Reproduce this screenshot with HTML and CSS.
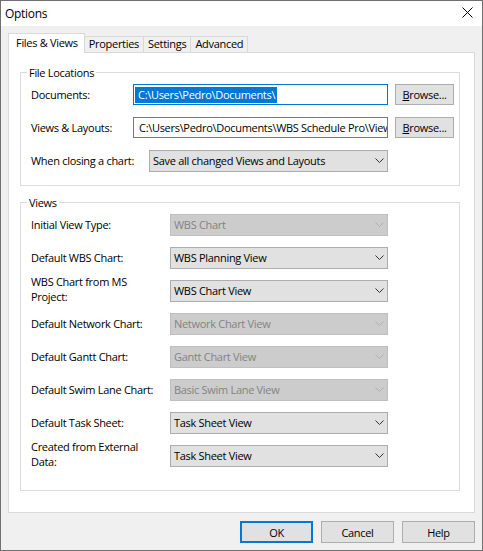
FILE: index.html
```html
<!DOCTYPE html>
<html lang="en">
<head>
    <meta charset="UTF-8">
    <title>Options</title>
    <link rel="stylesheet" href="styles.css">
</head>
<body>
    <div class="window">
        <!-- Title bar -->
        <div class="titlebar">
            <span class="title">Options</span>
            <svg class="close" width="11" height="11" viewBox="0 0 11 11">
                <path d="M0.5 0.5 L10.5 10.5 M10.5 0.5 L0.5 10.5" stroke="#000" stroke-width="1" fill="none"/>
            </svg>
        </div>

        <div class="body">
            <!-- Tabs -->
            <div class="tabs">
                <div class="tab active">Files &amp; Views</div>
                <div class="tab">Properties</div>
                <div class="tab">Settings</div>
                <div class="tab">Advanced</div>
            </div>

            <div class="panel">
                <!-- File Locations -->
                <div class="group files">
                    <span class="legend">File Locations</span>
                    <div class="row">
                        <span class="lbl">Documents:</span>
                        <div class="field focus"><span class="sel">C:\Users\Pedro\Documents\</span></div>
                        <div class="btn browse"><u>B</u>rowse...</div>
                    </div>
                    <div class="row">
                        <span class="lbl">Views &amp; Layouts:</span>
                        <div class="field"><span class="txt">C:\Users\Pedro\Documents\WBS Schedule Pro\View</span></div>
                        <div class="btn browse"><u>B</u>rowse...</div>
                    </div>
                    <div class="row">
                        <span class="lbl wide">When closing a chart:</span>
                        <div class="combo long"><span>Save all changed Views and Layouts</span><svg width="9" height="5" viewBox="0 0 9 5"><path d="M0.5 0.5 L4.5 4.5 L8.5 0.5" fill="none" stroke="currentColor"/></svg></div>
                    </div>
                </div>

                <!-- Views -->
                <div class="group views">
                    <span class="legend">Views</span>
                    <div class="row">
                        <span class="lbl vw">Initial View Type:</span>
                        <div class="combo off"><span>WBS Chart</span><svg width="9" height="5" viewBox="0 0 9 5"><path d="M0.5 0.5 L4.5 4.5 L8.5 0.5" fill="none" stroke="currentColor"/></svg></div>
                    </div>
                    <div class="row">
                        <span class="lbl vw">Default WBS Chart:</span>
                        <div class="combo"><span>WBS Planning View</span><svg width="9" height="5" viewBox="0 0 9 5"><path d="M0.5 0.5 L4.5 4.5 L8.5 0.5" fill="none" stroke="currentColor"/></svg></div>
                    </div>
                    <div class="row">
                        <span class="lbl vw two">WBS Chart from MS<br>Project:</span>
                        <div class="combo"><span>WBS Chart View</span><svg width="9" height="5" viewBox="0 0 9 5"><path d="M0.5 0.5 L4.5 4.5 L8.5 0.5" fill="none" stroke="currentColor"/></svg></div>
                    </div>
                    <div class="row">
                        <span class="lbl vw">Default Network Chart:</span>
                        <div class="combo off"><span>Network Chart View</span><svg width="9" height="5" viewBox="0 0 9 5"><path d="M0.5 0.5 L4.5 4.5 L8.5 0.5" fill="none" stroke="currentColor"/></svg></div>
                    </div>
                    <div class="row">
                        <span class="lbl vw">Default Gantt Chart:</span>
                        <div class="combo off"><span>Gantt Chart View</span><svg width="9" height="5" viewBox="0 0 9 5"><path d="M0.5 0.5 L4.5 4.5 L8.5 0.5" fill="none" stroke="currentColor"/></svg></div>
                    </div>
                    <div class="row">
                        <span class="lbl vw">Default Swim Lane Chart:</span>
                        <div class="combo off"><span>Basic Swim Lane View</span><svg width="9" height="5" viewBox="0 0 9 5"><path d="M0.5 0.5 L4.5 4.5 L8.5 0.5" fill="none" stroke="currentColor"/></svg></div>
                    </div>
                    <div class="row">
                        <span class="lbl vw">Default Task Sheet:</span>
                        <div class="combo"><span>Task Sheet View</span><svg width="9" height="5" viewBox="0 0 9 5"><path d="M0.5 0.5 L4.5 4.5 L8.5 0.5" fill="none" stroke="currentColor"/></svg></div>
                    </div>
                    <div class="row">
                        <span class="lbl vw two">Created from External<br>Data:</span>
                        <div class="combo"><span>Task Sheet View</span><svg width="9" height="5" viewBox="0 0 9 5"><path d="M0.5 0.5 L4.5 4.5 L8.5 0.5" fill="none" stroke="currentColor"/></svg></div>
                    </div>
                </div>
            </div>

            <!-- Dialog buttons -->
            <div class="buttons">
                <div class="btn dlg default">OK</div>
                <div class="btn dlg">Cancel</div>
                <div class="btn dlg">Help</div>
            </div>
        </div>
    </div>
</body>
</html>
```

FILE: styles.css
```css
* { box-sizing: border-box; }
body { margin: 0; font-family: "Open Sans", "Liberation Sans", Arial, sans-serif; font-size: 11px; letter-spacing: -0.3px; color: #000; background: #fff; }

.window { width: 483px; height: 551px; border: 1px solid #707070; background: #f0f0f0; overflow: hidden; }
.titlebar { height: 25px; background: #fff; display: flex; align-items: center; justify-content: space-between; padding: 0 9px 1px 4px; }
.title { font-size: 12px; }
.close { display: block; margin-top: -2px; }

.body { padding: 7px 7px 0 7px; }

.tabs { display: flex; align-items: flex-end; }
.tab { height: 16px; line-height: 14px; padding: 0 4px; border: 1px solid #d9d9d9; border-bottom: none; background: #f0f0f0; margin-left: -1px; white-space: nowrap; }
.tab.active { height: 20px; line-height: 17px; padding: 0 6px 0 7px; margin-left: 0; margin-bottom: -1px; background: #fff; position: relative; z-index: 1; }

.panel { height: 461px; background: #fff; border: 1px solid #d9d9d9; padding: 19px 14px 0 11px; }

.group { position: relative; border: 1px solid #dcdcdc; padding: 5px 0 0 10px; }
.group.files { height: 114px; }
.group.views { height: 289px; margin-top: 16px; }
.legend { position: absolute; top: -8px; left: 6px; padding: 0 2px; background: #fff; line-height: 15px; }

.row { display: flex; align-items: center; height: 33px; }
.lbl { width: 102px; flex: none; line-height: 15px; }
.lbl.wide { width: 118px; }
.lbl.vw { width: 139px; }
.lbl.two { margin-top: -3px; }

.field { width: 255px; flex: none; height: 21px; border: 1px solid #7a7a7a; background: #fff; padding: 0 1px; display: flex; align-items: center; overflow: hidden; white-space: nowrap; }
.field.focus { border-color: #0078d7; }
.sel { background: #0078d7; color: #fff; padding: 0 2px 0 3px; line-height: 16px; }
.txt { padding-left: 4px; }

.btn { height: 21px; border: 1px solid #adadad; background: #e1e1e1; display: flex; align-items: center; justify-content: center; white-space: nowrap; }
.browse { width: 59px; flex: none; margin-left: 7px; margin-top: -1px; }

.combo { width: 218px; height: 22px; border: 1px solid #adadad; background: #e1e1e1; display: flex; align-items: center; justify-content: space-between; padding: 0 3px 0 3px; color: #000; white-space: nowrap; }
.combo.long { width: 239px; }
.combo svg { display: block; color: #333; }
.combo.off { background: #cccccc; border-color: #bfbfbf; color: #838383; }
.combo.off svg { color: #b0b0b0; }

.buttons { display: flex; justify-content: flex-end; gap: 8px; margin-top: 8px; }
.dlg { width: 73px; height: 22px; }
.dlg.default { border: 2px solid #0078d7; }
```
